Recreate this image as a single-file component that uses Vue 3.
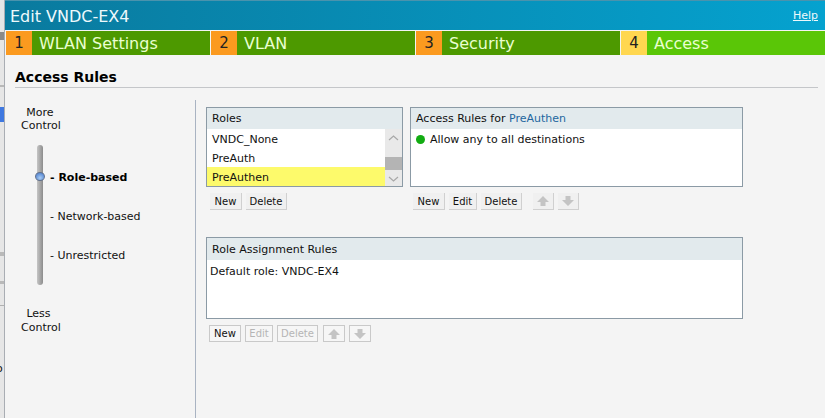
<template>
  <div class="screen">
    <div class="backdrop">
      <span class="bit bit-a"></span>
      <span class="bit bit-e"></span>
      <span class="bit bit-b"></span>
      <span class="bit bit-c"></span>
      <span class="bit bit-d"></span>
      <span class="bit bit-f"></span>
      <span class="bit-letter">o</span>
    </div>
    <div class="dialog">
      <div class="titlebar">
        <span class="title">Edit VNDC-EX4</span>
        <a class="help">Help</a>
      </div>
      <div class="steps">
        <div v-for="s in steps" :key="s.num" class="step" :class="{ current: s.current }">
          <span class="num">{{ s.num }}</span>
          <span class="label">{{ s.label }}</span>
        </div>
      </div>
      <div class="content">
        <h2 class="heading">Access Rules</h2>
        <div class="columns">
          <div class="control">
            <div class="cap"><span class="more">More</span><br />Control</div>
            <div class="slider">
              <div class="track">
                <span class="knob"></span>
              </div>
              <ul class="levels">
                <li class="on">- Role-based</li>
                <li>- Network-based</li>
                <li>- Unrestricted</li>
              </ul>
            </div>
            <div class="cap low"><span class="less">Less</span><br />Control</div>
          </div>
          <div class="main">
            <div class="row">
              <div class="group">
                <div class="panel roles">
                  <div class="phead">Roles</div>
                  <div class="listwrap">
                    <ul class="list">
                      <li>VNDC_None</li>
                      <li>PreAuth</li>
                      <li class="sel">PreAuthen</li>
                    </ul>
                    <div class="scroll">
                      <svg class="sb-up" width="17" height="17" viewBox="0 0 17 17"><path d="M4 11l4.500-4 4.500 4" fill="none" stroke="#a8a8a8" stroke-width="1.2" /></svg>
                      <span class="thumb"></span>
                      <svg width="17" height="16" viewBox="0 0 17 16"><path d="M4 7l4.500 4 4.500-4" fill="none" stroke="#a8a8a8" stroke-width="1.2" /></svg>
                    </div>
                  </div>
                </div>
                <div class="btns pad-roles">
                  <button class="btn b-new">New</button>
                  <button class="btn b-del">Delete</button>
                </div>
              </div>
              <div class="group">
                <div class="panel rules">
                  <div class="phead">Access Rules for <span class="link">PreAuthen</span></div>
                  <div class="pbody"><span class="dot"></span>Allow any to all destinations</div>
                </div>
                <div class="btns">
                  <button class="btn b-new">New</button>
                  <button class="btn b-edit">Edit</button>
                  <button class="btn b-del">Delete</button>
                  <button class="btn arrow off first-arrow"><svg width="14" height="14" viewBox="0 0 14 14"><path d="M7 2l6 6H9.500v4h-5V8H1z" fill="#c4c4c4" /></svg></button>
                  <button class="btn arrow off"><svg width="14" height="14" viewBox="0 0 14 14"><path d="M7 12L1 6h3.500V2h5v4H13z" fill="#c4c4c4" /></svg></button>
                </div>
              </div>
            </div>
            <div class="group assign">
              <div class="panel wide">
                <div class="phead tall">Role Assignment Rules</div>
                <div class="pbody plain">Default role: VNDC-EX4</div>
              </div>
              <div class="btns">
                <button class="btn outlined b-new">New</button>
                <button class="btn outlined off b-edit">Edit</button>
                <button class="btn outlined off b-del">Delete</button>
                <button class="btn outlined arrow off up-arrow"><svg width="14" height="14" viewBox="0 0 14 14"><path d="M7 2l6 6H9.500v4h-5V8H1z" fill="#c4c4c4" /></svg></button>
                <button class="btn outlined arrow off"><svg width="14" height="14" viewBox="0 0 14 14"><path d="M7 12L1 6h3.500V2h5v4H13z" fill="#c4c4c4" /></svg></button>
              </div>
            </div>
          </div>
        </div>
      </div>
    </div>
  </div>
</template>

<script setup>
const steps = [
  { num: 1, label: 'WLAN Settings' },
  { num: 2, label: 'VLAN' },
  { num: 3, label: 'Security' },
  { num: 4, label: 'Access', current: true },
]
</script>

<style>
html, body {
  margin: 0;
  overflow: hidden;
}
</style>

<style scoped>
.screen {
  display: flex;
  width: 825px;
  height: 418px;
  overflow: hidden;
  background: #e2e2e2;
  font-family: "DejaVu Sans", Verdana, sans-serif;
  font-size: 11px;
  color: #111;
}

.backdrop {
  position: relative;
  width: 4px;
  flex: none;
  overflow: hidden;
  background: #e6e6e6;
}

.bit {
  position: absolute;
  left: 0;
  width: 4px;
}

.bit-a { top: 32px; height: 8px; background: #8a8a8a; }
.bit-e { top: 85px; height: 2px; background: #b8b8b8; }
.bit-b { top: 107px; height: 15px; background: #3f78e0; }
.bit-c { top: 252px; height: 4px; background: #b9b9b9; }
.bit-d { top: 281px; height: 3px; background: #b9b9b9; }
.bit-f { top: 305px; height: 1px; background: #b0b0b0; }

.bit-letter {
  position: absolute;
  top: 362px;
  left: -4px;
  font-size: 11px;
}

.dialog {
  display: flex;
  flex: 1;
  flex-direction: column;
  min-width: 0;
  background: #f4f4f4;
  border-left: 1px solid #a9adb3;
}

.titlebar {
  display: flex;
  flex: none;
  align-items: center;
  justify-content: space-between;
  height: 30px;
  padding: 1px 7px 0 5px;
  box-sizing: border-box;
  border-top: 1px solid #4a93ad;
  background: linear-gradient(90deg, #0a7a9e, #05a2cf);
  color: #eef9fc;
}

.title {
  font-size: 16px;
}

.help {
  margin-bottom: 2px;
  font-size: 11px;
  text-decoration: underline;
}

.steps {
  display: flex;
  flex: none;
  height: 25px;
  padding-left: 1px;
  box-sizing: border-box;
  border-top: 1px solid #f4f4f4;
}

.step {
  display: flex;
  flex: none;
  align-items: center;
  width: 205px;
  height: 24px;
  box-sizing: border-box;
  border-right: 1px solid #f4f4f4;
  background: #4d9900;
  color: #eaffd0;
}

.step.current {
  flex: 1;
  border-right: 0;
  background: #5ac607;
}

.num {
  display: flex;
  flex: none;
  align-items: center;
  justify-content: center;
  width: 26px;
  height: 100%;
  background: #fb9a1f;
  color: #222;
  font-size: 15px;
}

.current .num {
  background: #ffd750;
}

.label {
  padding-left: 7px;
  font-size: 16px;
}

.content {
  flex: 1;
  min-height: 0;
  padding-left: 10px;
}

.heading {
  height: 32px;
  margin: 0 7px 0 0;
  line-height: 44px;
  border-bottom: 1px solid #c4c6c9;
  font-size: 14px;
  font-weight: 700;
  color: #000;
}

.columns {
  display: flex;
  height: 330px;
}

.control {
  flex: none;
  width: 181px;
  box-sizing: border-box;
  margin-top: 12px;
  padding-top: 6px;
  border-right: 1px solid #a9b3c2;
}

.cap {
  width: 52px;
  text-align: center;
  line-height: 13px;
}

.more {
  margin-right: 2px;
}

.less {
  margin-right: 5px;
}

.low {
  margin-top: 22px;
  line-height: 14px;
}

.slider {
  display: flex;
  height: 140px;
  margin-top: 13px;
}

.track {
  position: relative;
  flex: none;
  width: 6px;
  margin-left: 22px;
  border-radius: 3px;
  background: linear-gradient(90deg, #c5c5c5, #8c8c8c);
}

.knob {
  position: absolute;
  top: 27px;
  left: -2px;
  width: 10px;
  height: 9px;
  box-sizing: border-box;
  border: 1px solid #60708c;
  border-radius: 50%;
  background: radial-gradient(circle at 50% 70%, #a9cdf5, #3f73c8);
}

.levels {
  list-style: none;
  margin: 0;
  padding: 13px 0 0 7px;
}

.levels li {
  height: 39px;
  line-height: 39px;
}

.levels .on {
  font-weight: 700;
  color: #000;
}

.main {
  flex: 1;
  padding: 19px 0 0 10px;
}

.row {
  display: flex;
  gap: 7px;
}

.btns {
  display: flex;
  gap: 4px;
  margin-top: 6px;
  padding-left: 3px;
}

.pad-roles {
  padding-left: 4px;
}

.btn {
  height: 17px;
  padding: 0;
  margin: 0;
  box-sizing: border-box;
  border: 0;
  border-right: 1px solid #d0d0d0;
  border-bottom: 1px solid #d0d0d0;
  background: #f0f0f0;
  font: inherit;
  font-size: 10px;
  color: #111;
}

.b-new { width: 32px; }
.b-edit { width: 28px; }
.b-del { width: 41px; }

.outlined {
  border: 1px solid #c9c9c9;
  background: #f6f6f6;
}

.off {
  color: #b5b5b5;
}

.arrow {
  display: flex;
  align-items: center;
  justify-content: center;
  width: 21px;
}

.first-arrow {
  margin-left: 7px;
}

.up-arrow {
  margin-left: 1px;
}

.outlined.arrow {
  width: 22px;
}

.panel {
  box-sizing: border-box;
  border: 1px solid #8b9aa5;
  background: #fff;
}

.roles { width: 197px; height: 80px; }
.rules { width: 333px; height: 80px; }
.wide { width: 537px; height: 82px; }

.assign {
  margin-top: 27px;
}

.phead {
  height: 21px;
  line-height: 21px;
  padding-left: 5px;
  background: #e2eaed;
}

.tall {
  height: 22px;
  line-height: 23px;
}

.link {
  color: #22669f;
}

.listwrap {
  display: flex;
  height: 57px;
}

.list {
  flex: 1;
  list-style: none;
  margin: 0;
  padding: 0;
}

.list li {
  height: 19px;
  line-height: 21px;
  padding-left: 5px;
}

.list .sel {
  background: #fdfa6b;
}

.scroll {
  display: flex;
  flex-direction: column;
  width: 17px;
  background: #e9e9e9;
}

.sb-up {
  margin-bottom: 11px;
}

.thumb {
  flex: none;
  height: 13px;
  background: #b4b4b4;
}

.pbody {
  display: flex;
  align-items: center;
  height: 19px;
  padding: 1px 0 0 5px;
}

.plain {
  height: 20px;
  padding-left: 3px;
}

.dot {
  flex: none;
  width: 9px;
  height: 9px;
  margin-right: 5px;
  border-radius: 50%;
  background: #12ac12;
}
</style>
